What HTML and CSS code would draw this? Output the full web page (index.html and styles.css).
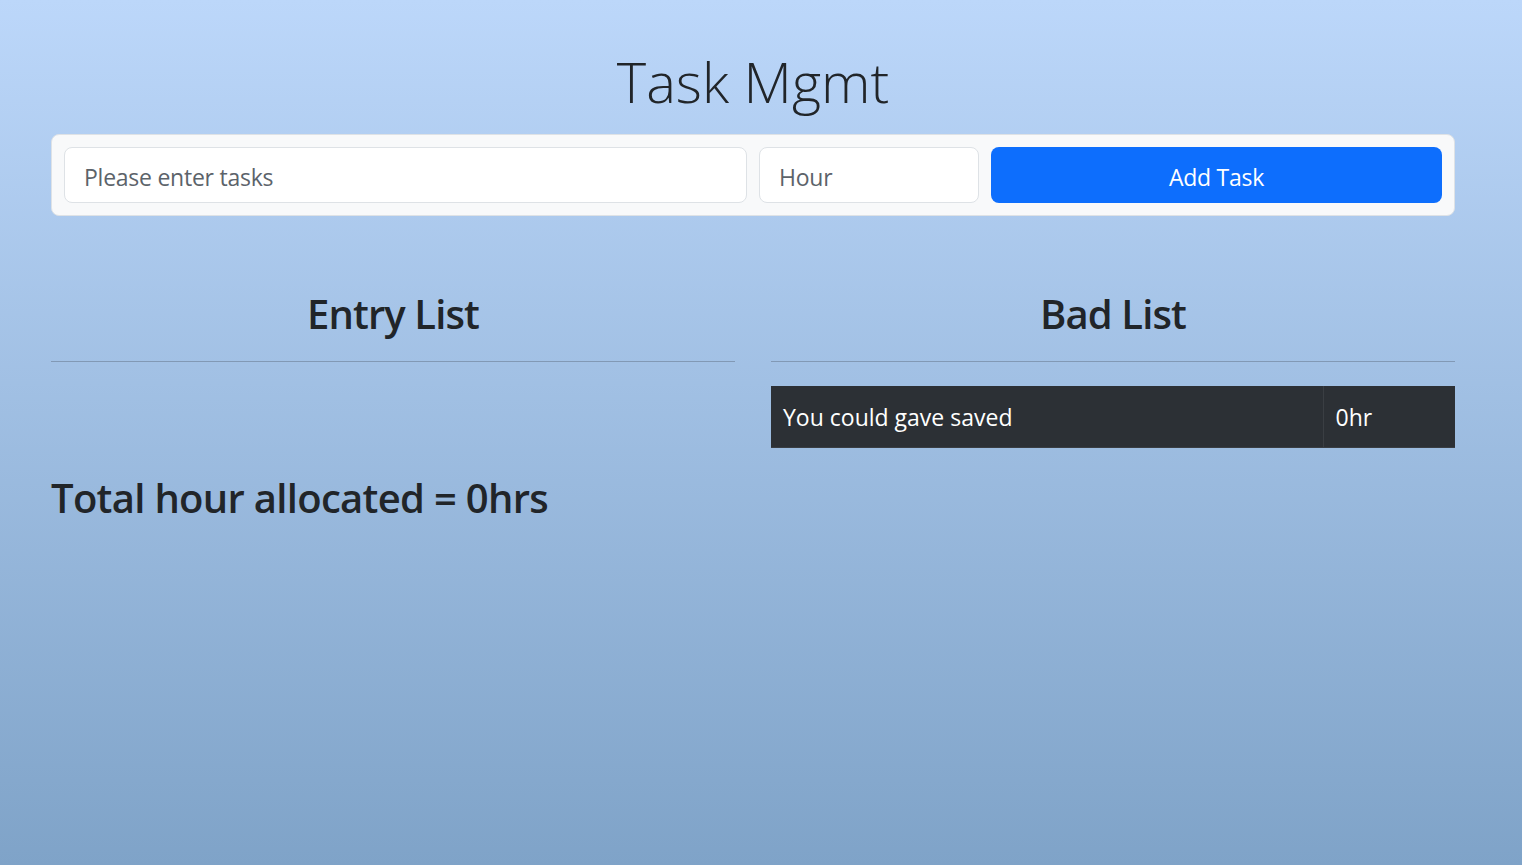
FILE: index.html
```html
<!DOCTYPE html>
<html lang="en">
<head>
<meta charset="utf-8">
<title>Task Mgmt</title>
<link rel="stylesheet" href="styles.css">
</head>
<body>
<div class="page">
  <h1 class="title">Task Mgmt</h1>
  <form class="task-form">
    <input class="field" type="text" placeholder="Please enter tasks">
    <input class="field" type="number" placeholder="Hour">
    <button class="add-btn" type="button">Add Task</button>
  </form>
  <div class="lists">
    <section class="list">
      <h2 class="list-title">Entry List</h2>
      <hr class="rule">
    </section>
    <section class="list">
      <h2 class="list-title">Bad List</h2>
      <hr class="rule">
      <table class="bad-table">
        <tr>
          <td class="cell-label">You could gave saved</td>
          <td class="cell-value">0hr</td>
        </tr>
      </table>
    </section>
  </div>
  <h2 class="total">Total hour allocated = 0hrs</h2>
</div>
</body>
</html>
```
FILE: styles.css
```css
html, body {
  margin: 0;
  padding: 0;
  min-height: 100%;
}
body {
  background: linear-gradient(180deg, #bcd7fa 0%, #7fa3c8 100%);
  min-height: 865px;
  font-family: "Open Sans", "Noto Sans", sans-serif;
  color: #212529;
}
.page {
  width: 1404px;
  margin-left: 51px;
  padding-top: 48px;
}
.title {
  margin: 0 0 19px;
  font-size: 56px;
  line-height: 67px;
  font-weight: 300;
  text-align: center;
}
.task-form {
  display: grid;
  grid-template-columns: 683px 220px 1fr;
  gap: 12px;
  padding: 12px;
  margin: 0;
  background: #f8f9fa;
  border: 1px solid #dee2e6;
  border-radius: 8px;
}
.field {
  height: 56px;
  box-sizing: border-box;
  padding: 3px 19px 0;
  border: 1px solid #dee2e6;
  border-radius: 8px;
  background: #fff;
  font-family: inherit;
  font-size: 23px;
  letter-spacing: -0.25px;
  color: #212529;
  outline: none;
  -moz-appearance: textfield;
}
.field::placeholder {
  color: #5c636a;
}
.field::-webkit-outer-spin-button,
.field::-webkit-inner-spin-button {
  -webkit-appearance: none;
  margin: 0;
}
.add-btn {
  height: 56px;
  padding: 3px 0 0;
  border: none;
  border-radius: 8px;
  background: #0d6efd;
  color: #fff;
  font-family: inherit;
  font-size: 23px;
  letter-spacing: -0.25px;
}
.lists {
  display: grid;
  grid-template-columns: 1fr 1fr;
  gap: 36px;
  margin-top: 74px;
}
.list-title {
  margin: 0 0 23px;
  font-size: 40px;
  line-height: 48px;
  font-weight: 600;
  letter-spacing: -0.9px;
  text-align: center;
}
.rule {
  margin: 0;
  border: 0;
  border-top: 1px solid rgba(33, 37, 41, 0.25);
}
.bad-table {
  width: 100%;
  margin-top: 24px;
  border-collapse: collapse;
  background: #2c3035;
  color: #fff;
  font-size: 23px;
}
.bad-table td {
  height: 61px;
  box-sizing: border-box;
  padding: 2px 12px 0;
  border-bottom: 1px solid #3a3e43;
}
.cell-value {
  width: 132px;
  border-left: 1px solid #3a3e43;
}
.total {
  margin: 26px 0 0;
  font-size: 40px;
  line-height: 48px;
  font-weight: 600;
  letter-spacing: -0.7px;
}
```
